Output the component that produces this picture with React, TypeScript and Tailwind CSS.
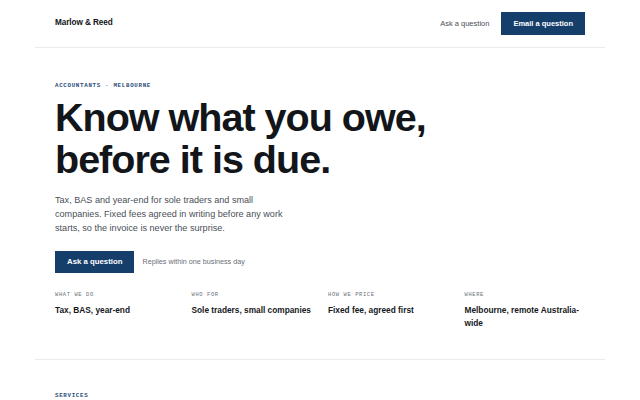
import React from "react";

const stats = [
  { label: "What we do", value: "Tax, BAS, year-end" },
  { label: "Who for", value: "Sole traders, small companies" },
  { label: "How we price", value: "Fixed fee, agreed first" },
  { label: "Where", value: "Melbourne, remote Australia-wide" },
];

export default function App() {
  return (
    <div className="min-h-screen bg-white px-[35px] text-[#111418] font-['Liberation_Sans',Arial,sans-serif]">
      <header className="flex items-center justify-between border-b border-[#ebebeb] pl-5 pr-5 py-3">
        <div className="text-[8.2px] font-bold tracking-[-0.01em]">Marlow &amp; Reed</div>
        <div className="flex items-center gap-3">
          <a className="text-[7.5px] text-[#4b5058]">Ask a question</a>
          <button className="h-[23px] bg-[#163e6b] px-3 text-[7.5px] font-bold text-white">
            Email a question
          </button>
        </div>
      </header>

      <section className="border-b border-[#ebebeb] px-5 pt-[33px] pb-[29px]">
        <div className="h-[10px] leading-[10px] font-['Liberation_Mono',monospace] text-[5.8px] font-bold uppercase tracking-[0.12em] text-[#2a4d78]">
          Accountants · Melbourne
        </div>
        <h1 className="mt-[5px] text-[39.5px] font-bold leading-[42px] tracking-[-0.025em] text-[#121519]">
          Know what you owe,
          <br />
          before it is due.
        </h1>
        <p className="mt-[13px] max-w-[245px] text-[9.1px] leading-[14px] text-[#4a4f57]">
          Tax, BAS and year-end for sole traders and small companies. Fixed fees agreed in writing before any work starts, so the invoice is never the surprise.
        </p>
        <div className="mt-[16px] flex items-center gap-2">
          <button className="h-[22px] bg-[#163e6b] px-3 text-[7.8px] font-bold text-white">
            Ask a question
          </button>
          <span className="text-[7.2px] text-[#6b7078]">Replies within one business day</span>
        </div>
        <div className="mt-[18px] grid grid-cols-4 gap-4">
          {stats.map((s) => (
            <div key={s.label}>
              <div className="h-[8px] leading-[8px] font-['Liberation_Mono',monospace] text-[5.4px] uppercase tracking-[0.12em] text-[#6b7078]">
                {s.label}
              </div>
              <div className="mt-[5px] text-[8.3px] font-bold leading-[13px] text-[#15181c]">
                {s.value}
              </div>
            </div>
          ))}
        </div>
      </section>

      <section className="px-5 pt-[31px]">
        <div className="h-[10px] leading-[10px] font-['Liberation_Mono',monospace] text-[5.8px] font-bold uppercase tracking-[0.12em] text-[#2a4d78]">
          Services
        </div>
      </section>
    </div>
  );
}
